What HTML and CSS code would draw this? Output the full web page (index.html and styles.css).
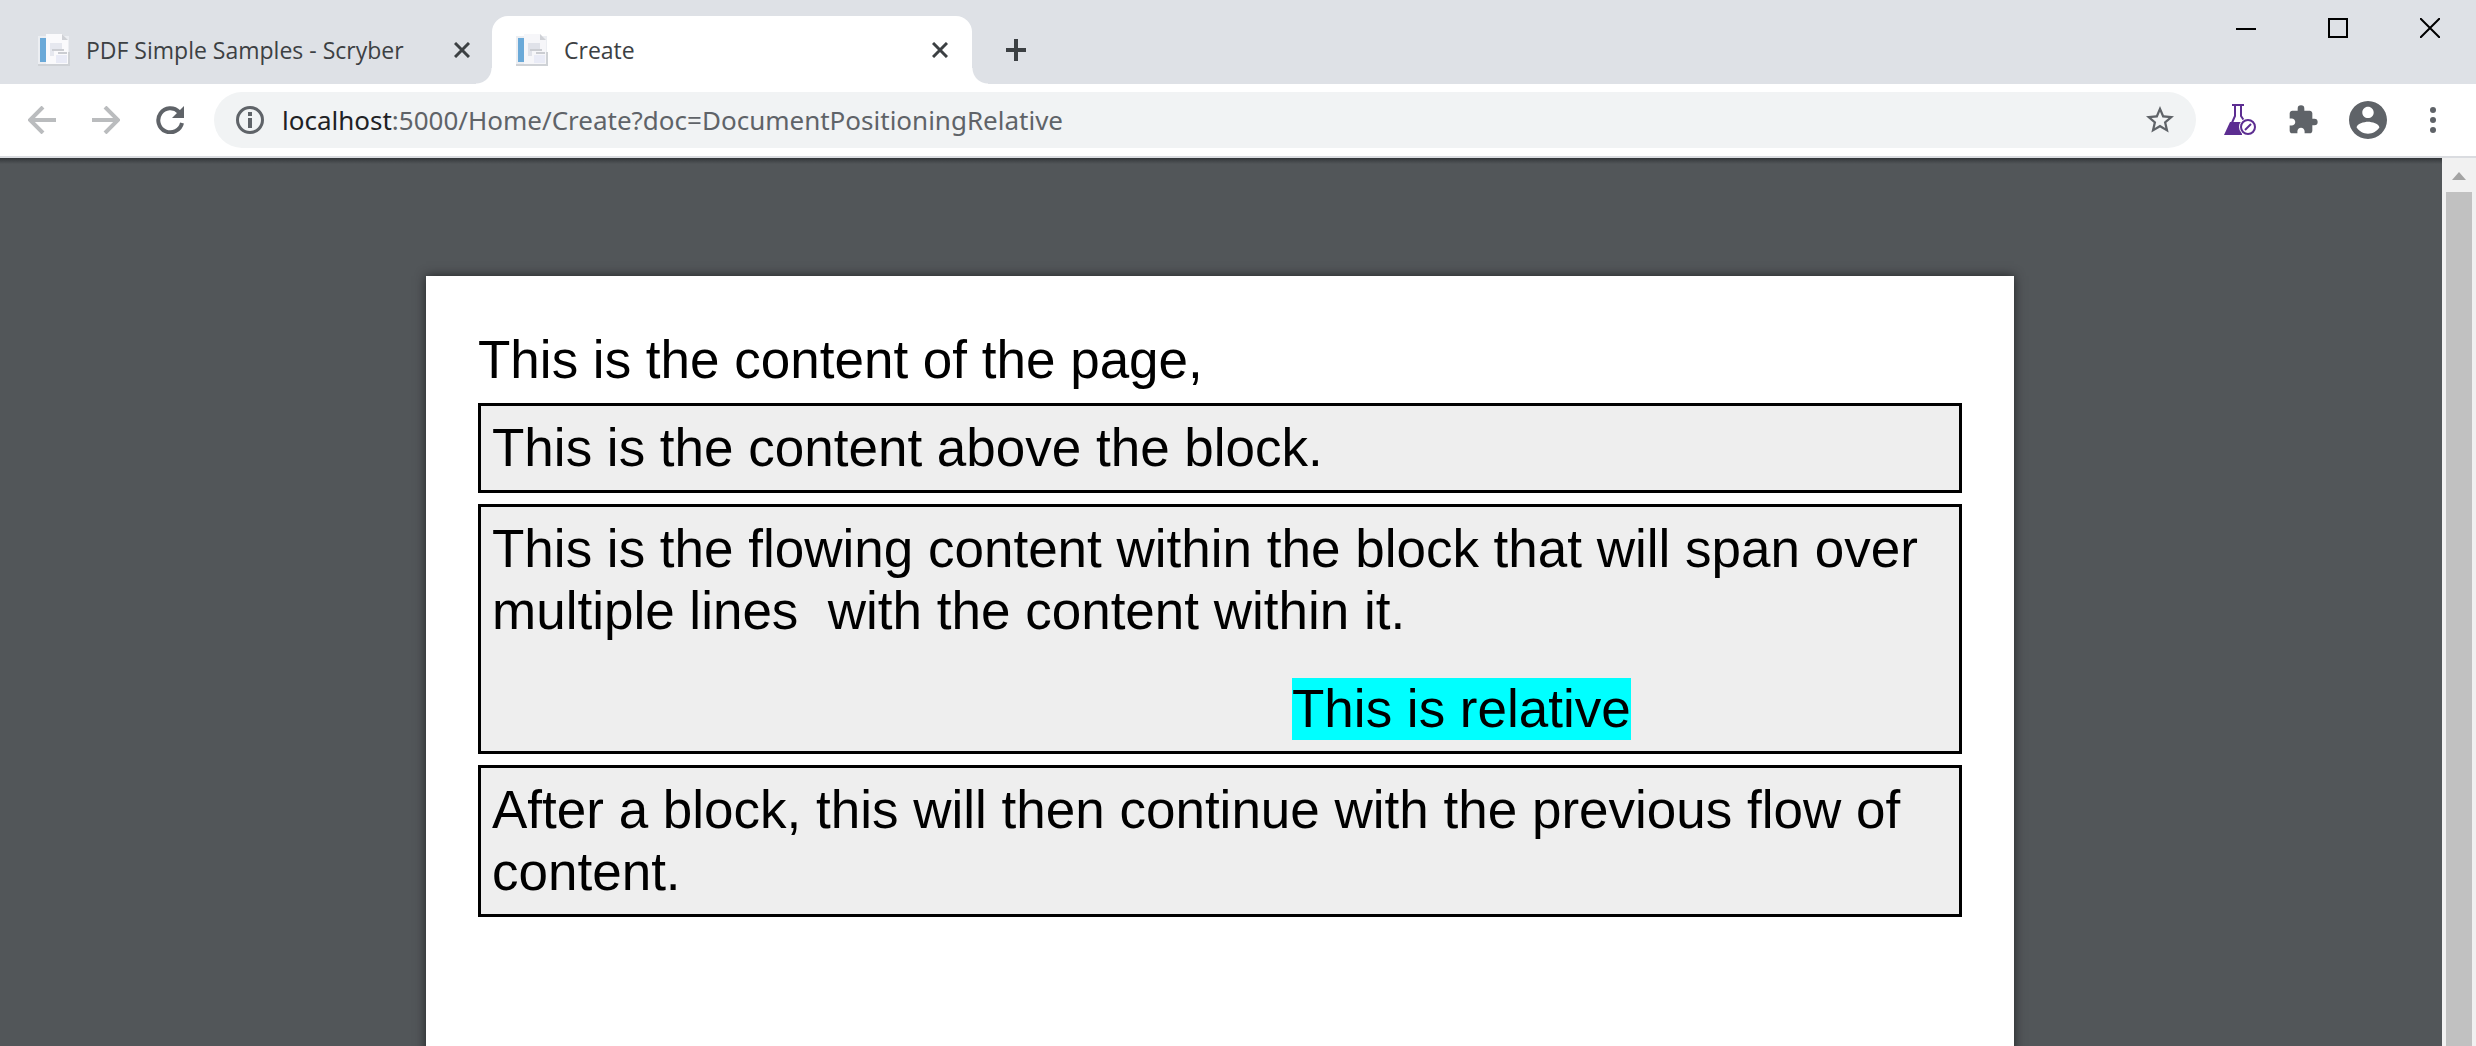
FILE: index.html
```html
<!DOCTYPE html>
<html lang="en">
<head>
<meta charset="utf-8">
<title>Create</title>
<link rel="stylesheet" href="styles.css">
</head>
<body>
<div class="window">
  <header class="tabstrip">
    <div class="tab">
      <svg class="favicon" viewBox="0 0 32 32" aria-hidden="true"><rect y="2" width="31" height="29" fill="#eceef2"/><rect x="2" y="4" width="6" height="24" fill="#6aa9d8"/><path d="M8 0h16l6 6v24H8z" fill="#fafafc"/><path d="M24 0v6h6z" fill="#cfd1d6"/><path d="M12 9h12v6h-8v7h-4z" fill="#e6e8ef"/><path d="M14 16h12M20 19h9" stroke="#cbcdd2" stroke-width="2"/><rect x="18" y="21" width="11" height="8" fill="#e9ebf6"/><path d="M0 31h31V18" stroke="#cfd2d6" stroke-width="2"/></svg>
      <span class="tab-title">PDF Simple Samples - Scryber</span>
      <button class="tab-close" aria-label="Close tab"><svg viewBox="0 0 16 16"><path d="M1 1l14 14M15 1L1 15"/></svg></button>
    </div>
    <div class="tab active">
      <svg class="favicon" viewBox="0 0 32 32" aria-hidden="true"><rect y="2" width="31" height="29" fill="#eceef2"/><rect x="2" y="4" width="6" height="24" fill="#6aa9d8"/><path d="M8 0h16l6 6v24H8z" fill="#f6f6f9"/><path d="M24 0v6h6z" fill="#cfd1d6"/><path d="M12 9h12v6h-8v7h-4z" fill="#e0e2e9"/><path d="M14 16h12M20 19h9" stroke="#cbcdd2" stroke-width="2"/><rect x="18" y="21" width="11" height="8" fill="#e9ebf6"/><path d="M0 31h31V18" stroke="#cfd2d6" stroke-width="2"/></svg>
      <span class="tab-title">Create</span>
      <button class="tab-close" aria-label="Close tab"><svg viewBox="0 0 16 16"><path d="M1 1l14 14M15 1L1 15"/></svg></button>
    </div>
    <button class="new-tab" aria-label="New tab"><svg viewBox="0 0 24 24"><path d="M2 12h20M12 1v22"/></svg></button>
    <div class="window-controls">
      <button aria-label="Minimize"><svg viewBox="0 0 20 20"><path d="M0 11h20"/></svg></button>
      <button aria-label="Maximize"><svg viewBox="0 0 20 20"><path d="M1 1h18v18H1z"/></svg></button>
      <button aria-label="Close"><svg viewBox="0 0 20 20"><path d="M0 0l20 20M20 0L0 20"/></svg></button>
    </div>
  </header>
  <nav class="toolbar">
    <button class="nav-button disabled" aria-label="Back"><svg viewBox="0 0 28 28"><path d="M28 14H3M15 1L2 14l13 13"/></svg></button>
    <button class="nav-button disabled" aria-label="Forward"><svg viewBox="0 0 28 28"><path d="M0 14h25M13 1l13 13-13 13"/></svg></button>
    <button class="nav-button" aria-label="Reload"><svg viewBox="0 0 28 28"><path d="M23 6A12 12 0 1 0 26 17" stroke-width="4"/><path d="M28 0v12H16z" class="solid"/></svg></button>
    <div class="omnibox">
      <svg class="icon info" viewBox="0 0 28 28" aria-hidden="true"><circle cx="14" cy="14" r="12.5"/><path d="M14 12v10M14 6v4" stroke-width="4"/></svg>
      <div class="url" role="textbox" aria-label="Address"><span class="host">localhost</span>:5000/Home/Create?doc=DocumentPositioningRelative</div>
      <button class="star" aria-label="Bookmark this page"><svg viewBox="2 2 20 20"><path fill="#5f6368" d="M22 9.240l-7.190-.62L12 2 9.190 8.630 2 9.240l5.460 4.730L5.820 21 12 17.270 18.180 21l-1.630-7.030L22 9.240zM12 15.400l-3.760 2.270 1-4.280-3.320-2.880 4.380-.38L12 6.100l1.710 4.040 4.380.38-3.320 2.880 1 4.280L12 15.400z"/></svg></button>
    </div>
    <button class="tool flask" aria-label="Extension"><svg viewBox="0 0 32 32"><path d="M8 1h12M11 1v11L3 30M17 1v11l4 6" stroke="#5c2d91" stroke-width="2"/><path d="M6 18h12v13H0z" fill="#5c2d91"/><circle cx="24" cy="23" r="9" fill="#fff"/><circle cx="24" cy="23" r="7" stroke="#5c2d91" stroke-width="2"/><path d="M21 26l6-6" stroke="#5c2d91" stroke-width="2"/></svg></button>
    <button class="tool puzzle" aria-label="Extensions"><svg viewBox="1 0 22 24"><path fill="#5f6368" d="M20.500 11H19V7c0-1.100-.9-2-2-2h-4V3.500a2.500 2.500 0 0 0-5 0V5H4c-1.100 0-1.990.9-1.990 2v3.800H3.500c1.490 0 2.700 1.210 2.700 2.700s-1.210 2.700-2.700 2.700H2V20c0 1.100.9 2 2 2h3.800v-1.500c0-1.490 1.210-2.700 2.700-2.700s2.700 1.210 2.700 2.700V22H17c1.100 0 2-.9 2-2v-4h1.500a2.500 2.500 0 0 0 0-5z"/></svg></button>
    <button class="tool avatar" aria-label="Profile"><svg viewBox="2 2 20 20"><path fill="#5f6368" d="M12 2C6.480 2 2 6.480 2 12s4.480 10 10 10 10-4.480 10-10S17.520 2 12 2zm0 3c1.660 0 3 1.340 3 3s-1.340 3-3 3-3-1.340-3-3 1.340-3 3-3zm0 14.200c-2.500 0-4.710-1.280-6-3.220.03-1.990 4-3.080 6-3.080s5.970 1.090 6 3.080c-1.290 1.940-3.500 3.220-6 3.220z"/></svg></button>
    <button class="tool menu" aria-label="Menu"><svg viewBox="0 0 6 28"><g fill="#5f6368"><circle cx="3" cy="4" r="3"/><circle cx="3" cy="14" r="3"/><circle cx="3" cy="24" r="3"/></g></svg></button>
  </nav>
  <div class="viewer">
    <main class="canvas">
      <article class="page">
        <p class="intro">This is the content of the page,</p>
        <section class="block">This is the content above the block.</section>
        <section class="block">
          <p class="flow">This is the flowing content within the block that will span over multiple lines &nbsp;with the content within it.</p>
          <span class="relative">This is relative</span>
        </section>
        <section class="block">After a block, this will then continue with the previous flow of content.</section>
      </article>
    </main>
    <div class="scrollbar" aria-hidden="true">
      <div class="arrow"><svg viewBox="0 0 14 8"><path d="M7 0l7 8H0z" fill="#a3a3a3"/></svg></div>
      <div class="thumb"></div>
    </div>
  </div>
</div>
</body>
</html>
```
FILE: styles.css
```css
* { box-sizing: border-box; }

body {
  margin: 0;
  font-family: "Open Sans", "Noto Sans", sans-serif;
}

p { margin: 0; }

button {
  margin: 0;
  padding: 0;
  border: 0;
  background: none;
  font: inherit;
}

svg {
  display: block;
  fill: none;
}

.window {
  display: flex;
  flex-direction: column;
  height: 100vh;
  overflow: hidden;
}

/* Tab strip */
.tabstrip {
  display: flex;
  flex: none;
  height: 84px;
  padding: 16px 0 0 12px;
  background: #dee1e6;
}

.tab {
  position: relative;
  display: flex;
  align-items: center;
  width: 480px;
  padding: 0 22px 0 26px;
  border-radius: 16px 16px 0 0;
  color: #3c4043;
  font-size: 23px;
  line-height: 32px;
}

.tab.active {
  padding: 0 24px;
  background: #fff;
}

.tab.active::before,
.tab.active::after {
  content: "";
  position: absolute;
  bottom: 0;
  width: 16px;
  height: 16px;
}

.tab.active::before {
  right: 100%;
  background: radial-gradient(circle at 0 0, transparent 15px, #fff 16px);
}

.tab.active::after {
  left: 100%;
  background: radial-gradient(circle at 100% 0, transparent 15px, #fff 16px);
}

.favicon {
  flex: none;
  width: 32px;
  height: 32px;
}

.tab-title {
  flex: 1;
  margin-left: 16px;
  white-space: nowrap;
}

.tab-close svg {
  width: 16px;
  height: 16px;
  stroke: #3c4043;
  stroke-width: 3;
}

.new-tab {
  margin-left: 32px;
}

.new-tab svg {
  width: 24px;
  height: 24px;
  stroke: #3c4043;
  stroke-width: 4;
}

.window-controls {
  display: flex;
  align-items: flex-start;
  gap: 72px;
  margin-left: auto;
  padding: 2px 36px 0 0;
}

.window-controls svg {
  width: 20px;
  height: 20px;
  stroke: #000;
  stroke-width: 2;
}

/* Toolbar */
.toolbar {
  display: flex;
  flex: none;
  align-items: center;
  height: 74px;
  padding: 0 40px 0 28px;
  border-bottom: 2px solid #dadce0;
  background: #fff;
}

.nav-button {
  margin-right: 36px;
}

.nav-button svg {
  width: 28px;
  height: 28px;
  stroke: #5f6368;
  stroke-width: 4;
}

.nav-button.disabled svg { stroke: #babcbe; }

.nav-button .solid {
  fill: #5f6368;
  stroke: none;
}

.nav-button:nth-child(3) { margin-right: 30px; }

.omnibox {
  display: flex;
  flex: 1;
  align-items: center;
  height: 56px;
  padding: 0 22px;
  border-radius: 28px;
  background: #f1f3f4;
}

.icon,
.star svg {
  width: 28px;
  height: 28px;
}

.icon {
  stroke: #5f6368;
  stroke-width: 3;
}

.url {
  flex: 1;
  margin-left: 18px;
  color: #5f6368;
  font-family: "Noto Sans", sans-serif;
  font-size: 26px;
  line-height: 36px;
  white-space: nowrap;
}

.host { color: #202124; }

.flask { margin-left: 28px; }
.flask svg { width: 32px; height: 32px; }

.puzzle { margin-left: 32px; }
.puzzle svg { width: 30px; height: 32px; }

.avatar { margin-left: 31px; }
.avatar svg { width: 38px; height: 38px; }

.menu { margin-left: 43px; }
.menu svg { width: 6px; height: 28px; }

/* PDF viewer */
.viewer {
  display: flex;
  flex: 1;
  min-height: 0;
}

.canvas {
  flex: 1;
  overflow: hidden;
  padding: 118px 428px 0 426px;
  background: linear-gradient(#323639, #525659 6px);
}

.page {
  min-height: 2245px;
  padding: 53px 52px;
  background: #fff;
  box-shadow: 0 0 10px #222426;
  color: #000;
  font-family: "Liberation Sans", Arial, sans-serif;
  font-size: 53px;
  line-height: 62px;
}

.intro { padding-bottom: 1px; }

.block {
  margin-top: 11px;
  padding: 11px;
  border: 3px solid #000;
  background: #eee;
}

.relative {
  display: block;
  width: max-content;
  margin: 36px 0 0 800px;
  background: #0ff;
}

/* Scrollbar */
.scrollbar {
  display: flex;
  flex: none;
  flex-direction: column;
  width: 34px;
  padding: 0 4px;
  background: #f1f1f1;
}

.arrow {
  display: flex;
  justify-content: center;
  height: 34px;
  padding-top: 14px;
}

.arrow svg { width: 14px; height: 8px; }

.thumb {
  flex: 1;
  background: #c1c1c1;
}
```
